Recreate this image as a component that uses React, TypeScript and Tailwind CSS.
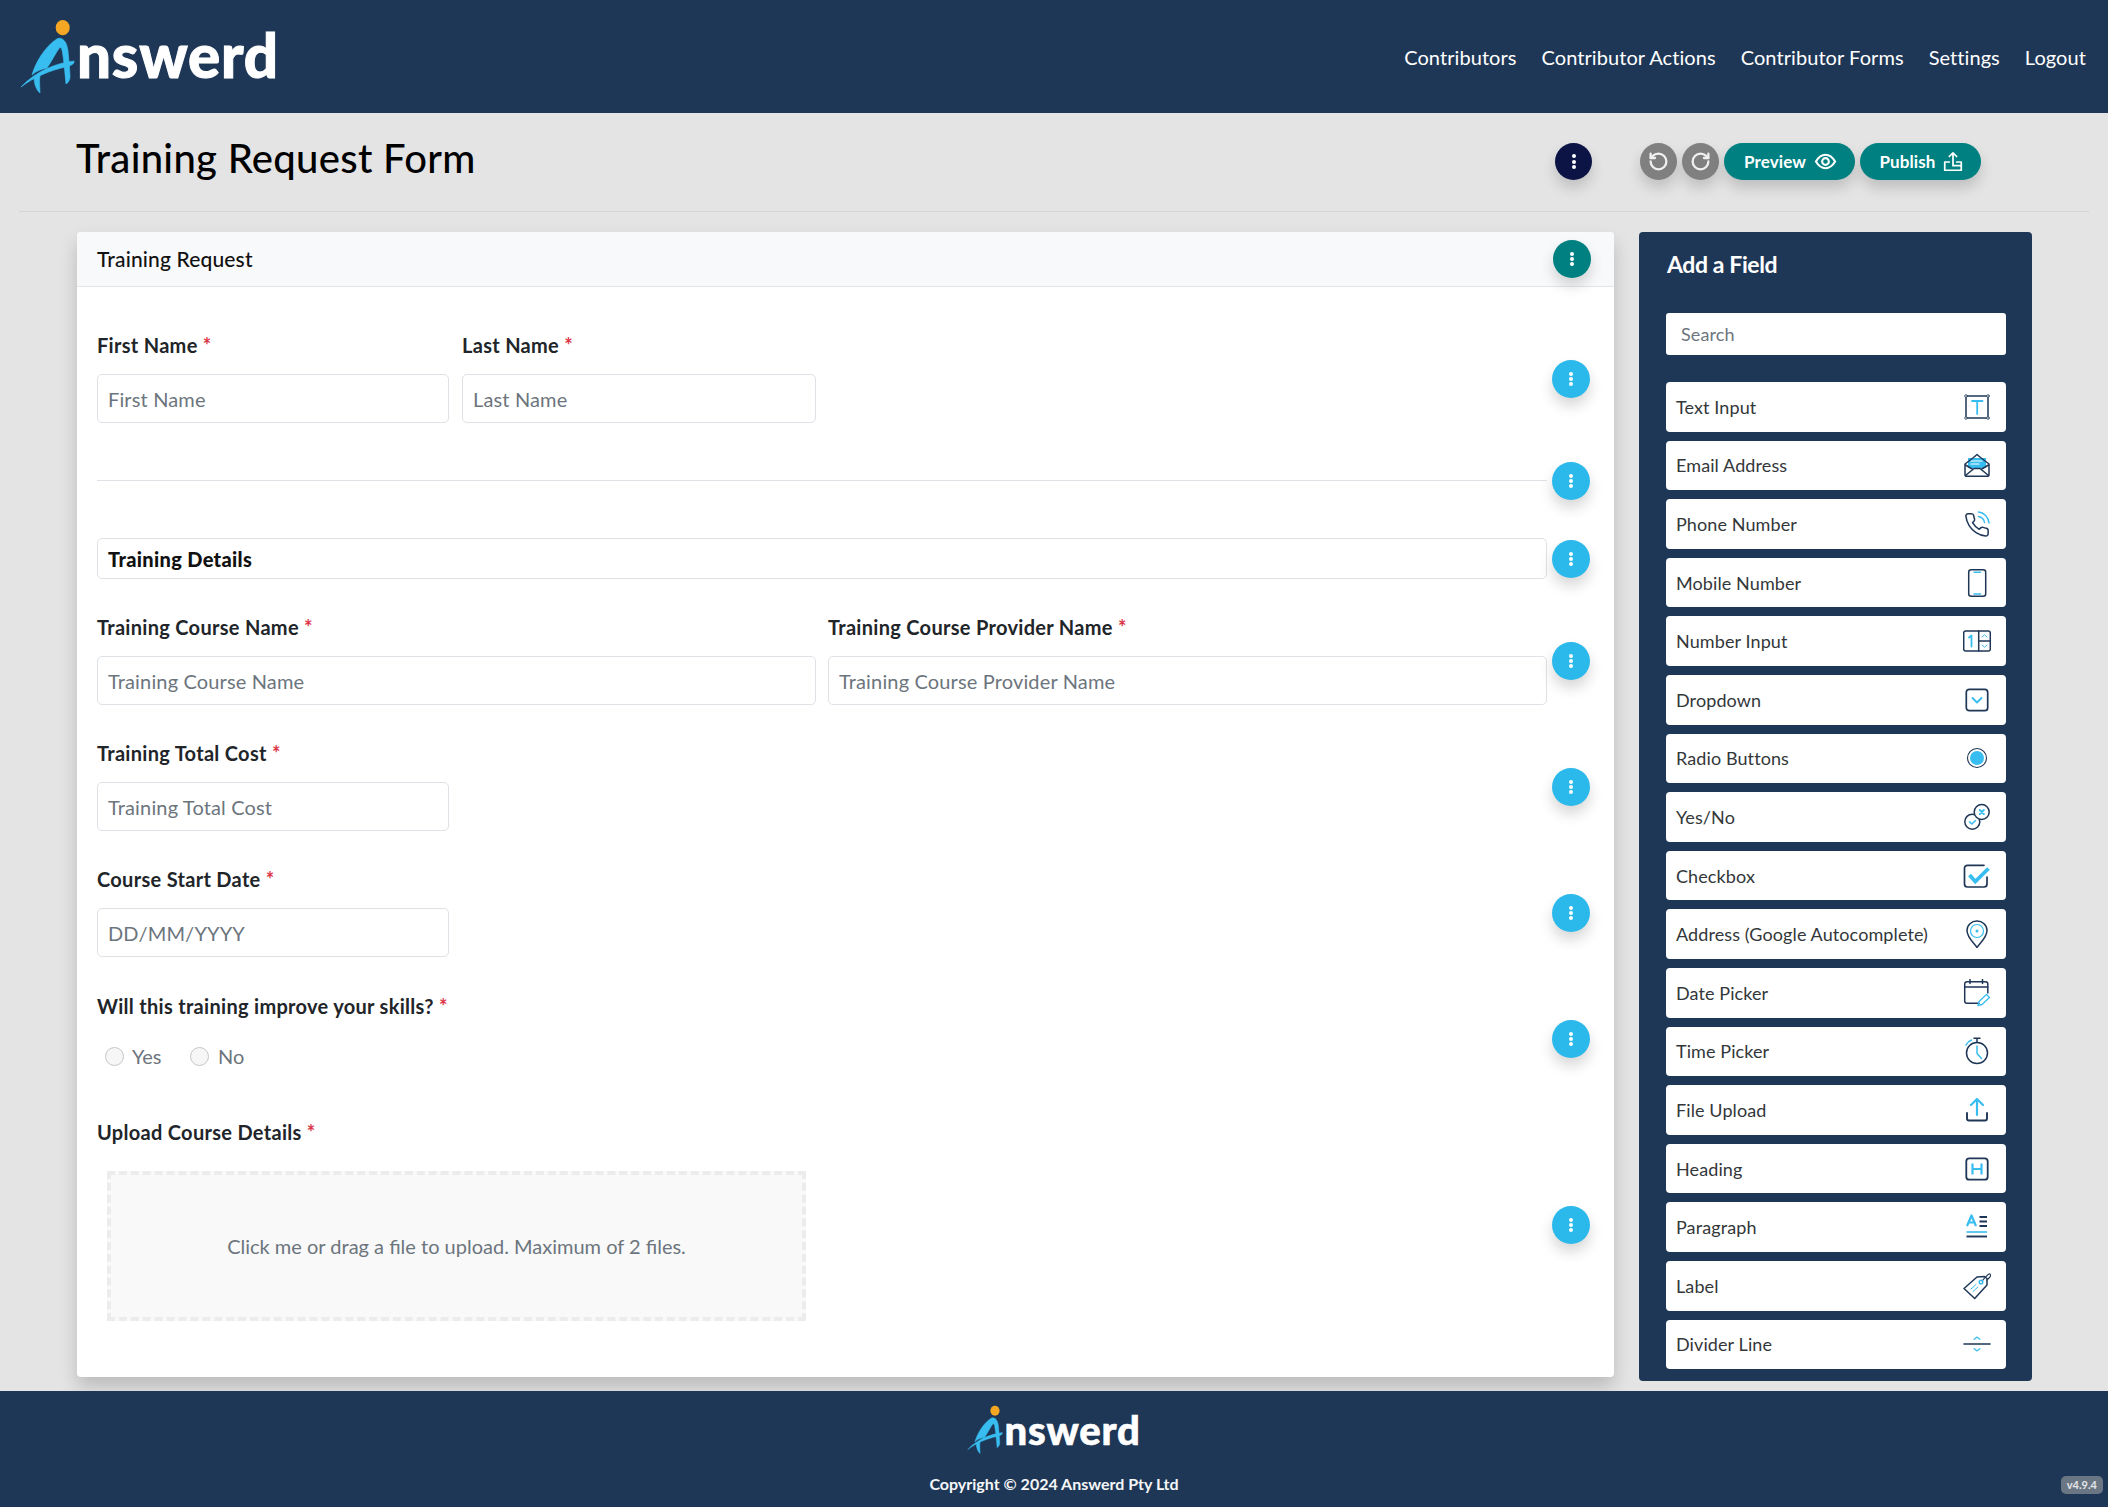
import { RotateCcw, RotateCw } from 'lucide-react'
import type { ReactNode } from 'react'

const NAV = ['Contributors', 'Contributor Actions', 'Contributor Forms', 'Settings', 'Logout']

const NAVY = '#1f3756'
const SKY = '#38bdf0'

function LogoMark({ className }: { className: string }) {
  return (
    <svg viewBox="4 4 58 76" className={className}>
      <ellipse cx="46.7" cy="12.7" rx="7" ry="7.6" fill="#f5a623" />
      <g fill={SKY} stroke={SKY} strokeWidth="0.6" strokeLinejoin="round">
        <path d="M41.5 23.5C47 22 51 27 52 36C53 46 54 56 54 62C54 65 52 68 50 69C49 60 48 45 46 35C45 32 44 32 43 33.5C39 39 36 46 31 53C26 54 20 56 16 60C19 49 28 32 41.5 23.5Z" />
        <path d="M5 72C20 56 40 48 58 46C59 49 54 51 50 52C35 55 18 62 5 72Z" />
        <path d="M18 62C20 61 22 60 24 60C23 66 24 72 24 78C20 75 18 68 18 62Z" />
      </g>
    </svg>
  )
}

function Dots({ tone }: { tone: string }) {
  return (
    <button className={`flex h-[38px] w-[38px] shrink-0 flex-col items-center justify-center gap-[1px] rounded-full shadow-[0_8px_14px_rgba(0,0,0,0.16)] ${tone}`}>
      <span className="h-[4px] w-[4px] rounded-full bg-white" />
      <span className="h-[4px] w-[4px] rounded-full bg-white" />
      <span className="h-[4px] w-[4px] rounded-full bg-white" />
    </button>
  )
}

function Label({ text }: { text: string }) {
  return (
    <div className="h-[20px] text-[20px] leading-[20px] font-bold tracking-[0.3px] whitespace-nowrap text-[#212529]">
      {text} <span className="text-[#dc3545]">*</span>
    </div>
  )
}

function Field({ label, placeholder, className }: { label: string; placeholder: string; className: string }) {
  return (
    <div className={className}>
      <Label text={label} />
      <input
        placeholder={placeholder}
        className="mt-[19px] block h-[49px] w-full rounded-[5px] border border-[#dee2e6] bg-white px-[10px] text-[20px] tracking-[0.15px] outline-none placeholder:text-[#6c757d]"
      />
    </div>
  )
}

function Row({ className, children }: { className: string; children: ReactNode }) {
  return (
    <div className={`flex items-center ${className}`}>
      <div className="w-[1450px] shrink-0">{children}</div>
      <div className="ml-[5px]">
        <Dots tone="bg-[#2bb8ea]" />
      </div>
    </div>
  )
}

function Icon({ children }: { children: ReactNode }) {
  return (
    <svg viewBox="0 0 28 28" width="28" height="28" fill="none" stroke={NAVY} strokeWidth="1.5" strokeLinecap="round" strokeLinejoin="round" className="shrink-0">
      {children}
    </svg>
  )
}

const FIELDS: { name: string; icon: ReactNode }[] = [
  {
    name: 'Text Input',
    icon: (
      <>
        <rect x="3" y="3" width="22" height="22" />
        <circle cx="3" cy="3" r="1.3" fill="#fff" strokeWidth="0.8" />
        <circle cx="25" cy="3" r="1.3" fill="#fff" strokeWidth="0.8" />
        <circle cx="3" cy="25" r="1.3" fill="#fff" strokeWidth="0.8" />
        <circle cx="25" cy="25" r="1.3" fill="#fff" strokeWidth="0.8" />
        <path d="M9 8H19.5M14.2 8V21" stroke={SKY} strokeWidth="1.8" />
      </>
    ),
  },
  {
    name: 'Email Address',
    icon: (
      <>
        <path d="M5 7H23V17H5Z" fill={SKY} stroke="none" />
        <path d="M8 10H19M8 13H16" stroke="#fff" strokeWidth="1.2" />
        <path d="M2 13L10.5 6.5L14 3.5L17.5 6.5L26 13V23.5C26 24.5 25 25.3 24 25.3H4C3 25.3 2 24.5 2 23.5Z" />
        <path d="M2.5 24.5L11 17.5H17L25.5 24.5M2.5 14L10 18.5M25.5 14L18 18.5" />
      </>
    ),
  },
  {
    name: 'Phone Number',
    icon: (
      <>
        <path
          transform="translate(0.5 1.5) scale(1.12)"
          strokeWidth="1.35"
          d="M22 16.92v3a2 2 0 0 1-2.18 2 19.79 19.79 0 0 1-8.63-3.07 19.5 19.5 0 0 1-6-6 19.79 19.79 0 0 1-3.07-8.67A2 2 0 0 1 4.11 2h3a2 2 0 0 1 2 1.72 12.84 12.84 0 0 0 .7 2.81 2 2 0 0 1-.45 2.11L8.09 9.91a16 16 0 0 0 6 6l1.27-1.27a2 2 0 0 1 2.11-.45 12.84 12.84 0 0 0 2.81.7A2 2 0 0 1 22 16.92z"
        />
        <path d="M15.5 2C21 2.5 25.5 7 26 13M15.5 6.5C18.5 7 21 9.5 21.5 12.5" stroke={SKY} />
      </>
    ),
  },
  {
    name: 'Mobile Number',
    icon: (
      <>
        <rect x="5.7" y="0.8" width="17" height="26.4" rx="2.5" />
        <path d="M11 3.2H17.5M11 25H17.5" stroke={SKY} />
      </>
    ),
  },
  {
    name: 'Number Input',
    icon: (
      <>
        <rect x="0.7" y="4" width="26.6" height="20" rx="2" />
        <path d="M15.7 4V24M15.7 14H27.3" />
        <path d="M6 10.5L8.5 8.5V19.5" stroke={SKY} strokeWidth="1.8" />
        <path d="M19 10L21.5 7.8L24 10M19 18L21.5 20.2L24 18" stroke={SKY} strokeWidth="1" />
      </>
    ),
  },
  {
    name: 'Dropdown',
    icon: (
      <>
        <rect x="3.3" y="3.3" width="21.4" height="21.4" rx="3" strokeWidth="1.7" />
        <path d="M9.5 12L14 16.5L18.5 12" stroke={SKY} strokeWidth="1.9" />
      </>
    ),
  },
  {
    name: 'Radio Buttons',
    icon: (
      <>
        <circle cx="14" cy="14" r="9.5" strokeWidth="1.1" />
        <circle cx="14" cy="14" r="7" fill={SKY} stroke="none" />
      </>
    ),
  },
  {
    name: 'Yes/No',
    icon: (
      <>
        <circle cx="9.3" cy="18.7" r="7.5" />
        <circle cx="18.7" cy="9" r="7.5" fill="#fff" />
        <path d="M6.5 18.7L8.8 21L12.5 17.5" stroke={SKY} />
        <path d="M16.8 7L20.8 11M20.8 7L16.8 11" stroke={SKY} strokeWidth="2" />
      </>
    ),
  },
  {
    name: 'Checkbox',
    icon: (
      <>
        <path d="M21 3.3H4.5C2.7 3.3 1.5 4.5 1.5 6.3V22C1.5 23.8 2.7 25 4.5 25H21C22.8 25 24 23.8 24 22V15" strokeWidth="1.7" />
        <path d="M6.5 13L12.3 19.5L25.5 6.5" stroke={SKY} strokeWidth="3.8" strokeLinecap="butt" strokeLinejoin="miter" />
      </>
    ),
  },
  {
    name: 'Address (Google Autocomplete)',
    icon: (
      <>
        <path d="M14 27.5C11 23 4 17.5 4 10.5C4 5 8.5 1 14 1C19.5 1 24 5 24 10.5C24 17.5 17 23 14 27.5Z" />
        <circle cx="14" cy="11" r="6.5" stroke={SKY} strokeWidth="1.2" />
        <circle cx="14" cy="11" r="1.5" fill={SKY} stroke="none" />
      </>
    ),
  },
  {
    name: 'Date Picker',
    icon: (
      <>
        <path d="M16 24.3H4C2.7 24.3 1.7 23.3 1.7 22V5C1.7 3.7 2.7 2.7 4 2.7H22.5C23.8 2.7 24.8 3.7 24.8 5V14" />
        <path d="M1.7 8H24.8M7 0.5V4.5M19.5 0.5V4.5" />
        <path d="M15 26.5L16 22.5L23.5 15.5L26.5 18.5L19 25.5Z" stroke={SKY} strokeWidth="1.3" />
      </>
    ),
  },
  {
    name: 'Time Picker',
    icon: (
      <>
        <circle cx="14" cy="16" r="10.5" />
        <path d="M11 1.2H17M14 1.2V5.5" />
        <path d="M14 9V16.5L18.5 21.5" stroke={SKY} />
        <path d="M3 8C4 6 6 4 8.5 3" stroke={SKY} />
      </>
    ),
  },
  {
    name: 'File Upload',
    icon: (
      <>
        <path d="M14 3V19M8 9L14 3L20 9" stroke={SKY} strokeWidth="2.2" />
        <path d="M4 17V22.5C4 24 5 24.5 6 24.5H22C23 24.5 24 24 24 22.5V17" strokeWidth="1.9" />
      </>
    ),
  },
  {
    name: 'Heading',
    icon: (
      <>
        <rect x="3.3" y="3.3" width="21.4" height="21.4" rx="3" strokeWidth="1.8" />
        <path d="M9.5 8.5V19.5M18.5 8.5V19.5M9.5 14H18.5" stroke={SKY} strokeWidth="2.2" strokeLinecap="butt" />
      </>
    ),
  },
  {
    name: 'Paragraph',
    icon: (
      <>
        <path d="M4 13L8.5 2.5L13 13M5.5 9.5H11.5" stroke={SKY} strokeWidth="2.2" strokeLinecap="butt" />
        <path d="M16.5 4H24M16.5 8.5H24M16.5 13H24" strokeWidth="2" strokeLinecap="butt" />
        <path d="M3.5 19H24" stroke={SKY} strokeWidth="1.6" strokeLinecap="butt" />
        <path d="M3.5 23.5H24" strokeWidth="1.9" strokeLinecap="butt" />
      </>
    ),
  },
  {
    name: 'Label',
    icon: (
      <>
        <path d="M1 16.5L14 5L21.5 4.5L24 6.5L24 13L11.7 26.5Z" />
        <path d="M19 9C21 7 24 3 26 2C27.5 1.5 28 3.5 27 5L24 8" strokeWidth="1.1" />
        <circle cx="18" cy="10" r="1.8" stroke={SKY} />
        <path d="M8 17L13 12.5M10 19.5L15 15" stroke={SKY} strokeWidth="1" />
      </>
    ),
  },
  {
    name: 'Divider Line',
    icon: (
      <>
        <path d="M1 14H27" strokeWidth="1.6" />
        <path d="M11 9.5L14 7L17 9.5M11 18.5L14 21L17 18.5" stroke={SKY} strokeWidth="1.1" />
      </>
    ),
  },
]

export default function App() {
  return (
    <div className="h-[1507px] overflow-hidden bg-[#e4e4e4] font-['Lato',sans-serif]">
      {/* Header */}
      <header className="flex h-[113px] items-center justify-between bg-[#1f3756] pr-[22px] pl-[20px]">
        <div className="flex items-start">
          <LogoMark className="h-[76px] w-[58px]" />
          <span className="mt-[6px] -ml-[1px] text-[60px] leading-[60px] font-black tracking-[0.8px] text-white [-webkit-text-stroke:1px_white]">nswerd</span>
        </div>
        <nav className="flex gap-[25px]">
          {NAV.map((n) => (
            <a key={n} className="text-[20px] tracking-[0.07px] text-white">
              {n}
            </a>
          ))}
        </nav>
      </header>

      {/* Title bar */}
      <div className="mx-[19px] flex h-[99px] items-start border-b border-[#d5d5d5] pt-[30px] pl-[57px]">
        <h1 className="-mt-[1px] w-[1479px] text-[40px] leading-[32px] font-medium tracking-[0.3px] text-black">Training Request Form</h1>
        <button className="flex h-[37px] w-[37px] flex-col items-center justify-center gap-[1.5px] rounded-full bg-[#0b1444] shadow-[0_8px_14px_rgba(0,0,0,0.16)]">
          <span className="h-[4px] w-[4px] rounded-full bg-white" />
          <span className="h-[4px] w-[4px] rounded-full bg-white" />
          <span className="h-[4px] w-[4px] rounded-full bg-white" />
        </button>
        <div className="ml-[48px] flex gap-[5px]">
          <button className="flex h-[37px] w-[37px] items-center justify-center rounded-full bg-[#808080] shadow-[0_8px_14px_rgba(0,0,0,0.16)]">
            <RotateCcw size={21} strokeWidth={2.6} className="text-[#f0f0f0]" />
          </button>
          <button className="flex h-[37px] w-[37px] items-center justify-center rounded-full bg-[#808080] shadow-[0_8px_14px_rgba(0,0,0,0.16)]">
            <RotateCw size={21} strokeWidth={2.6} className="text-[#f0f0f0]" />
          </button>
          <button className="flex h-[37px] w-[131px] items-center justify-center gap-[8px] rounded-full bg-[#008080] pl-[2px] text-[17px] font-bold tracking-[0.1px] text-white shadow-[0_8px_14px_rgba(0,0,0,0.16)]">
            Preview
            <svg viewBox="0 0 24 24" width="23" height="23" fill="none" stroke="white" strokeWidth="2.2">
              <path d="M2 12C5 7 8 5 12 5C16 5 19 7 22 12C19 17 16 19 12 19C8 19 5 17 2 12Z" />
              <circle cx="12" cy="12" r="3.5" />
            </svg>
          </button>
          <button className="flex h-[37px] w-[121px] items-center justify-center gap-[6px] rounded-full bg-[#008080] pl-[2px] text-[17px] font-bold tracking-[0.1px] text-white shadow-[0_8px_14px_rgba(0,0,0,0.16)]">
            Publish
            <svg viewBox="0 0 24 24" width="22" height="22" fill="none" stroke="white" strokeWidth="1.9" strokeLinecap="round" strokeLinejoin="round">
              <path d="M12 15V2M8 6L12 2L16 6" />
              <path d="M8 12H3V21H21V16H12" />
              <path d="M16 12H21V16" />
            </svg>
          </button>
        </div>
      </div>

      {/* Main */}
      <main className="mt-[20px] ml-[77px] flex items-start">
        <section className="h-[1145px] w-[1537px] rounded-[4px] bg-white shadow-[0_10px_18px_rgba(0,0,0,0.18)]">
          <div className="flex h-[55px] items-center rounded-t-[4px] border-b border-[#e3e5e7] bg-[#f8f9fa] pr-[23px] pl-[20px]">
            <span className="flex-1 text-[21px] font-medium tracking-[0.15px] text-[#111]">Training Request</span>
            <Dots tone="bg-[#008080]" />
          </div>
          <div className="pl-[20px]">
            <Row className="mt-[48px]">
              <div className="flex gap-[13px]">
                <Field label="First Name" placeholder="First Name" className="w-[352px]" />
                <Field label="Last Name" placeholder="Last Name" className="w-[354px]" />
              </div>
            </Row>
            <Row className="mt-[39px] h-[38px]">
              <div className="mb-[2px] h-px bg-[#dee2e6]" />
            </Row>
            <Row className="mt-[38px]">
              <div className="flex h-[41px] items-center rounded-[5px] border border-[#dee2e6] px-[10px] text-[20px] font-black tracking-[0.33px] text-[#111]">Training Details</div>
            </Row>
            <Row className="mt-[38px]">
              <div className="flex gap-[12px]">
                <Field label="Training Course Name" placeholder="Training Course Name" className="w-[719px]" />
                <Field label="Training Course Provider Name" placeholder="Training Course Provider Name" className="w-[719px]" />
              </div>
            </Row>
            <Row className="mt-[38px]">
              <Field label="Training Total Cost" placeholder="Training Total Cost" className="w-[352px]" />
            </Row>
            <Row className="mt-[38px]">
              <Field label="Course Start Date" placeholder="DD/MM/YYYY" className="w-[352px]" />
            </Row>
            <Row className="mt-[39px]">
              <div className="pb-[16px]">
                <Label text="Will this training improve your skills?" />
                <div className="mt-[31px] flex items-center pl-[8px] text-[20px] leading-[19px] text-[#6c757d]">
                  <input type="radio" className="h-[19px] w-[19px] appearance-none rounded-full border border-[#c4c7ca] bg-[#f6f6f6]" />
                  <span className="ml-[8px] w-[58px]">Yes</span>
                  <input type="radio" className="h-[19px] w-[19px] appearance-none rounded-full border border-[#c4c7ca] bg-[#f6f6f6]" />
                  <span className="ml-[9px]">No</span>
                </div>
              </div>
            </Row>
            <Row className="mt-[40px]">
              <div className="pb-[7px]">
                <Label text="Upload Course Details" />
                <div className="mt-[29px] ml-[10px] flex h-[150px] w-[699px] items-center justify-center border-4 border-dashed border-[#ececec] bg-[#f9f9f9] text-[20px] text-[#6c757d]">
                  Click me or drag a file to upload. Maximum of 2 files.
                </div>
              </div>
            </Row>
          </div>
        </section>

        <aside className="ml-[25px] h-[1149px] w-[393px] rounded-[4px] bg-[#1f3756] pt-[18px] pr-[26px] pl-[27px]">
          <h2 className="pl-[1px] text-[23px] leading-[28px] font-bold tracking-[-0.4px] text-white">Add a Field</h2>
          <input
            placeholder="Search"
            className="mt-[35px] block h-[42px] w-full rounded-[3px] bg-white px-[15px] text-[18px] tracking-[0.1px] outline-none placeholder:text-[#6c757d]"
          />
          <div className="mt-[27px] flex flex-col gap-[9px]">
            {FIELDS.map((f) => (
              <div key={f.name} className="flex h-[49.6px] items-center justify-between rounded-[4px] bg-white pr-[15px] pl-[10px] text-[18px] tracking-[0.1px] text-[#33373a]">
                <span className="mt-[1px]">{f.name}</span>
                <Icon>{f.icon}</Icon>
              </div>
            ))}
          </div>
        </aside>
      </main>

      {/* Footer */}
      <footer className="relative mt-[10px] flex h-[116px] flex-col items-center bg-[#1f3756] pt-[14px]">
        <div className="flex items-start">
          <LogoMark className="h-[50px] w-[38px]" />
          <span className="mt-[5px] -ml-[1px] text-[40px] leading-[40px] font-black tracking-[0.8px] text-white [-webkit-text-stroke:0.6px_white]">nswerd</span>
        </div>
        <p className="mt-[17px] text-[16px] leading-[24px] font-bold text-[#f4f6f8]">Copyright © 2024 Answerd Pty Ltd</p>
        <span className="absolute right-[5px] bottom-[13px] rounded-[5px] bg-[#6b7684] px-[6px] text-[11px] leading-[18px] font-bold text-[#e3e6e9]">v4.9.4</span>
      </footer>
    </div>
  )
}
